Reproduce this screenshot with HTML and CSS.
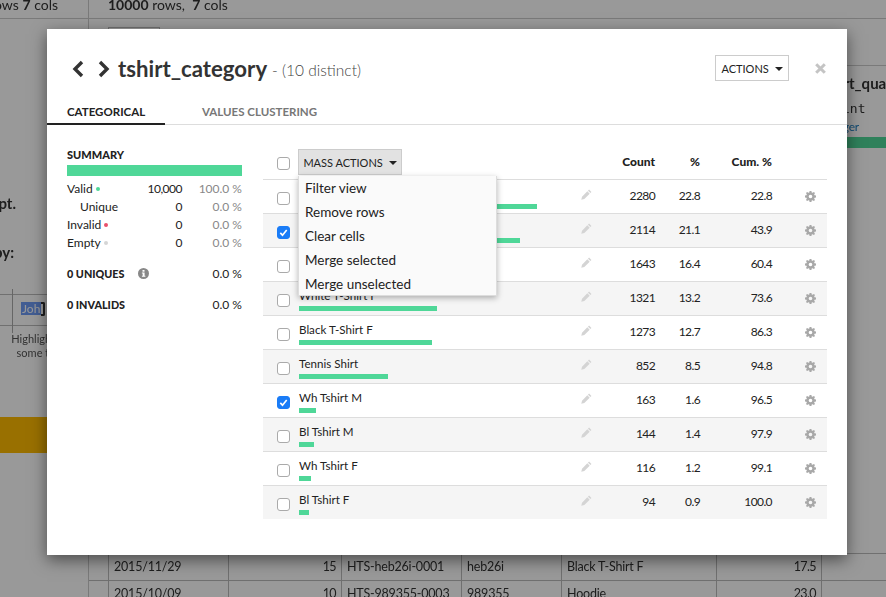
FILE: index.html
```html
<!doctype html>
<html lang="en">
<head>
<meta charset="utf-8">
<title>tshirt_category</title>
<link rel="stylesheet" href="styles.css">
</head>
<body>

<svg class="defs" width="0" height="0">
	<symbol id="gear" viewBox="0 0 12 12">
		<path fill-rule="evenodd" d="M5 0h2l.3 1.600 1 .4L9.700 1.100l1.200 1.200L10 3.700l.4 1L12 5v2l-1.600.3-.4 1 .9 1.400-1.200 1.200L8.300 10l-1 .4L7 12H5l-.3-1.600-1-.4-1.400.9-1.200-1.200L2 8.300l-.4-1L0 7V5l1.600-.3.4-1-.9-1.400 1.200-1.200L3.700 2l1-.4zM6 4a2 2 0 1 0 0 4 2 2 0 0 0 0-4z"/>
	</symbol>
	<symbol id="pencil" viewBox="0 0 12 12">
		<path d="M8.800.6l2.600 2.600-1.200 1.200-2.600-2.600zM6.900 2.500l2.600 2.600-5.900 5.900-3.300.8.800-3.400z"/>
	</symbol>
	<symbol id="check" viewBox="0 0 12 12">
		<path d="M2.500 6.500l2.400 2.400 4.600-5.600" fill="none" stroke="#fff" stroke-width="1.800"/>
	</symbol>
</svg>

<div class="backdrop">
	<div class="topstrip">
		<div class="topstrip-left"><span>10000 rows <b>7</b> cols</span></div>
		<div class="topstrip-main"><b>10000</b> rows,&nbsp; <b>7</b> cols</div>
	</div>
	<div class="middle">
		<div class="side">
			<div class="side-line side-strong side-first">Accept.</div>
			<div class="side-line side-query">Display by:</div>
			<div class="side-cells"><i class="side-vline"></i><span class="side-hl">John</span><i class="side-bracket"></i></div>
			<div class="side-line side-hint">Highlight</div>
			<div class="side-line side-hint">some te</div>
			<div class="side-band"></div>
		</div>
		<div class="main"><div class="main-btn"></div></div>
		<div class="rightcol">
			<div class="rightcol-name">tshirt_quantity</div>
			<div class="rightcol-type">int</div>
			<div class="rightcol-meaning">Integer</div>
			<div class="rightcol-bar"></div>
		</div>
	</div>
	<div class="bgtable">
		<div class="bgrow">
			<span>2015/11/29</span><span class="num">15</span><span>HTS-heb26i-0001</span><span>heb26i</span><span>Black T-Shirt F</span><span class="num">17.5</span><span></span>
		</div>
		<div class="bgrow">
			<span>2015/10/09</span><span class="num">10</span><span>HTS-989355-0003</span><span>989355</span><span>Hoodie</span><span class="num">23.0</span><span></span>
		</div>
	</div>
</div>
<div class="scrim"></div>

<div class="modal">

	<div class="modal-head">
		<div class="title">
			<svg class="nav" width="14" height="18" viewBox="0 0 14 18"><path d="M11 2L4 9l7 7" fill="none" stroke="#333" stroke-width="3.400"/></svg>
			<svg class="nav nav-next" width="14" height="18" viewBox="0 0 14 18"><path d="M3 2l7 7-7 7" fill="none" stroke="#333" stroke-width="3.400"/></svg>
			<h1>tshirt_category</h1>
			<span class="distinct">- (10 distinct)</span>
		</div>
		<button class="btn-actions">ACTIONS <i class="caret"></i></button>
		<svg class="close" width="11" height="11" viewBox="0 0 11 11"><path d="M1.200 1.200l8.600 8.600M9.800 1.200l-8.600 8.600" stroke="#c4c4c4" stroke-width="3"/></svg>
	</div>

	<div class="tabs">
		<div class="tab tab-on">CATEGORICAL</div>
		<div class="tab">VALUES CLUSTERING</div>
	</div>

	<div class="modal-body">

		<div class="summary">
			<div class="summary-title">SUMMARY</div>
			<div class="summary-bar"></div>
			<div class="stat"><span>Valid <i class="dot dot-valid"></i></span><span class="stat-n">10,000</span><span class="stat-p">100.0 %</span></div>
			<div class="stat"><span class="stat-sub">Unique</span><span class="stat-n">0</span><span class="stat-p">0.0 %</span></div>
			<div class="stat"><span>Invalid <i class="dot dot-invalid"></i></span><span class="stat-n">0</span><span class="stat-p">0.0 %</span></div>
			<div class="stat"><span>Empty <i class="dot dot-empty"></i></span><span class="stat-n">0</span><span class="stat-p">0.0 %</span></div>
			<div class="total">
				<b>0 UNIQUES</b>
				<svg class="info" width="11" height="11" viewBox="0 0 11 11"><circle cx="5.500" cy="5.500" r="5.500" fill="#888"/><rect x="4.500" y="2" width="2" height="1.700" fill="#fff"/><path d="M3.900 4.500h2.700v3.200h.8v1H3.900v-1h.8V5.500h-.8z" fill="#fff"/></svg>
				<span>0.0 %</span>
			</div>
			<div class="total"><b>0 INVALIDS</b><span>0.0 %</span></div>
		</div>

		<div class="values">
			<div class="grid-row values-head">
				<span class="box"></span>
				<div class="mass">
					<button class="btn-mass">MASS ACTIONS <i class="caret"></i></button>
					<div class="menu">
						<div>Filter view</div>
						<div>Remove rows</div>
						<div>Clear cells</div>
						<div>Merge selected</div>
						<div>Merge unselected</div>
					</div>
				</div>
				<b class="num col-count">Count</b>
				<b class="num">%</b>
				<b class="num">Cum. %</b>
			</div>

			<div class="grid-row item">
				<span class="box"></span>
				<div class="label">White T-Shirt M<div class="bar" style="width:238px"></div></div>
				<svg class="pencil"><use href="#pencil"/></svg>
				<span class="num">2280</span><span class="num">22.8</span><span class="num">22.8</span>
				<svg class="gear"><use href="#gear"/></svg>
			</div>
			<div class="grid-row item">
				<span class="box box-on"><svg width="12" height="12"><use href="#check"/></svg></span>
				<div class="label">Hoodie<div class="bar" style="width:221px"></div></div>
				<svg class="pencil"><use href="#pencil"/></svg>
				<span class="num">2114</span><span class="num">21.1</span><span class="num">43.9</span>
				<svg class="gear"><use href="#gear"/></svg>
			</div>
			<div class="grid-row item">
				<span class="box"></span>
				<div class="label">Black T-Shirt M<div class="bar" style="width:171px"></div></div>
				<svg class="pencil"><use href="#pencil"/></svg>
				<span class="num">1643</span><span class="num">16.4</span><span class="num">60.4</span>
				<svg class="gear"><use href="#gear"/></svg>
			</div>
			<div class="grid-row item">
				<span class="box"></span>
				<div class="label">White T-Shirt F<div class="bar" style="width:138px"></div></div>
				<svg class="pencil"><use href="#pencil"/></svg>
				<span class="num">1321</span><span class="num">13.2</span><span class="num">73.6</span>
				<svg class="gear"><use href="#gear"/></svg>
			</div>
			<div class="grid-row item">
				<span class="box"></span>
				<div class="label">Black T-Shirt F<div class="bar" style="width:133px"></div></div>
				<svg class="pencil"><use href="#pencil"/></svg>
				<span class="num">1273</span><span class="num">12.7</span><span class="num">86.3</span>
				<svg class="gear"><use href="#gear"/></svg>
			</div>
			<div class="grid-row item">
				<span class="box"></span>
				<div class="label">Tennis Shirt<div class="bar" style="width:89px"></div></div>
				<svg class="pencil"><use href="#pencil"/></svg>
				<span class="num">852</span><span class="num">8.5</span><span class="num">94.8</span>
				<svg class="gear"><use href="#gear"/></svg>
			</div>
			<div class="grid-row item">
				<span class="box box-on"><svg width="12" height="12"><use href="#check"/></svg></span>
				<div class="label">Wh Tshirt M<div class="bar" style="width:17px"></div></div>
				<svg class="pencil"><use href="#pencil"/></svg>
				<span class="num">163</span><span class="num">1.6</span><span class="num">96.5</span>
				<svg class="gear"><use href="#gear"/></svg>
			</div>
			<div class="grid-row item">
				<span class="box"></span>
				<div class="label">Bl Tshirt M<div class="bar" style="width:15px"></div></div>
				<svg class="pencil"><use href="#pencil"/></svg>
				<span class="num">144</span><span class="num">1.4</span><span class="num">97.9</span>
				<svg class="gear"><use href="#gear"/></svg>
			</div>
			<div class="grid-row item">
				<span class="box"></span>
				<div class="label">Wh Tshirt F<div class="bar" style="width:12px"></div></div>
				<svg class="pencil"><use href="#pencil"/></svg>
				<span class="num">116</span><span class="num">1.2</span><span class="num">99.1</span>
				<svg class="gear"><use href="#gear"/></svg>
			</div>
			<div class="grid-row item">
				<span class="box"></span>
				<div class="label">Bl Tshirt F<div class="bar" style="width:10px"></div></div>
				<svg class="pencil"><use href="#pencil"/></svg>
				<span class="num">94</span><span class="num">0.9</span><span class="num">100.0</span>
				<svg class="gear"><use href="#gear"/></svg>
			</div>
		</div>

	</div>
</div>

</body>
</html>
```

FILE: styles.css
```css
html, body { height: 100%; margin: 0; }
body { background: #fff; color: #222; font: 13px Lato, "Noto Sans", sans-serif; height: 597px; overflow: hidden; position: relative; }
b { font-weight: 700; }
.defs { display: block; height: 0; }

/* page behind the dialog */
.backdrop { color: #333; display: grid; filter: blur(.4px); grid-template-rows: 19px 1fr 44px; height: 597px; }
.scrim { background: rgba(0, 0, 0, .4); inset: 0; position: absolute; }

.topstrip { border-bottom: 1px solid #ccc; display: flex; font-size: 14px; line-height: 9px; overflow: hidden; }
.topstrip-left { border-right: 1px solid #ccc; display: flex; justify-content: flex-end; padding-right: 30px; white-space: nowrap; width: 58px; }
.topstrip-main { padding-left: 19px; }

.middle { display: grid; grid-template-columns: 88px 1fr 39px; min-height: 0; }
.side { overflow: hidden; width: 55px; }
.side-line { display: flex; justify-content: flex-end; white-space: nowrap; }
.side-first { margin-top: 174px; padding-right: 39px; }
.side-strong { font-size: 15px; font-weight: 700; line-height: 20px; }
.side-query { font-size: 15px; font-weight: 700; line-height: 20px; margin-top: 29px; padding-right: 41px; }
.side-cells { align-items: flex-start; border-bottom: 1px solid #bbb; border-top: 1px solid #bbb; display: flex; height: 23px; margin-top: 32px; padding: 7px 10px 0 0; }
.side-vline { background: #aaa; height: 44px; margin: -13px auto 0 12px; width: 1px; }
.side-hl { background: #6f9cf5; box-sizing: border-box; color: #fff; font-size: 12px; height: 13px; line-height: 13px; overflow: hidden; padding-left: 1px; width: 20px; }
.side-bracket { border: 2px solid #333; border-left: 0; border-radius: 0 2px 2px 0; box-sizing: border-box; height: 14px; width: 4px; }
.side-hint { color: #555; font-size: 11px; line-height: 14px; }
.side-hint:nth-child(4) { margin-top: 6px; }
.side-band { background: #ffbb00; height: 36px; margin-top: 57px; }

.main { border-left: 1px solid #ccc; padding: 8px 0 0 19px; }
.main-btn { border: 1px solid #bbb; height: 40px; width: 50px; }

.rightcol { overflow: hidden; }
.rightcol-name { border-top: 1px solid #ccc; font-size: 15px; font-weight: 700; line-height: 34px; margin: 46px 0 0 -28px; white-space: nowrap; }
.rightcol-type { font: 13px/18px "DejaVu Sans Mono", monospace; margin-left: -5px; }
.rightcol-meaning { color: #1f7fc0; font-size: 12px; letter-spacing: -.2px; line-height: 18px; margin-left: -24px; }
.rightcol-bar { background: #4fd798; height: 11px; margin-top: 1px; }

.bgtable { border-left: 1px solid #ccc; margin-left: 88px; }
.bgrow { border-top: 1px solid #bbb; box-sizing: border-box; display: grid; font-size: 12.500px; grid-template-columns: 19px 120px 113px 120px 100px 155px 105px 1fr; height: 27px; letter-spacing: -.2px; line-height: 26px; }
.bgrow::before { content: ""; grid-column: 1; }
.bgrow span { border-left: 1px solid #bbb; overflow: hidden; padding: 0 5px; white-space: nowrap; }
.bgrow .num { text-align: right; }

/* dialog */
.modal { background: #fff; box-shadow: 0 5px 15px rgba(0, 0, 0, .5); height: 526px; left: 47px; position: absolute; top: 29px; width: 800px; }

.modal-head { align-items: center; display: flex; height: 26px; padding: 26px 21px 0 24px; }
.title { align-items: center; display: flex; flex: 1; margin-top: 2px; }
.nav-next { margin-left: 12px; }
h1 { color: #333; font-size: 22.200px; font-weight: 700; line-height: 26px; margin: 0 5px 0 7px; }
.distinct { color: #444; font-size: 15.500px; font-weight: 300; margin-top: 2px; }
.btn-actions { background: #fff; border: 1px solid #ccc; color: #222; font: 11px Lato, sans-serif; height: 26px; padding: 0; width: 74px; }
.close { margin-left: 26px; }
.caret { border-left: 4px solid transparent; border-right: 4px solid transparent; border-top: 4px solid #222; display: inline-block; margin-left: 3px; vertical-align: 2px; }

.tabs { border-bottom: 1px solid #ddd; box-sizing: border-box; display: flex; height: 24px; margin-top: 20px; }
.tab { box-sizing: border-box; color: #777; font-size: 11.500px; font-weight: 700; height: 24px; line-height: 22px; padding: 0 20px; }
.tab-on { border-bottom: 2px solid #222; color: #222; margin-right: 17px; width: 118px; }

.modal-body { display: flex; padding-left: 20px; }

.summary { padding-top: 23px; width: 175px; }
.summary-title { font-size: 11px; font-weight: 900; line-height: 14px; }
.summary-bar { background: #4fd798; height: 11px; margin: 3px 0 4px; }
.stat { display: grid; font-size: 12px; grid-template-columns: 75px 40px 60px; line-height: 18px; }
.stat-sub { padding-left: 13px; }
.stat-n { letter-spacing: -.5px; text-align: right; }
.stat-p { color: #888; text-align: right; }
.dot { border-radius: 50%; display: inline-block; height: 4px; vertical-align: 2px; width: 4px; }
.dot-valid { background: #4fd798; }
.dot-invalid { background: #e9506a; }
.dot-empty { background: #d5d5d5; }
.total { display: flex; font-size: 12px; line-height: 18px; margin-top: 13px; }
.total b { font-size: 10.800px; font-weight: 900; }
.total span { margin-left: auto; }
.info { margin: 3px 0 0 14px; }

.values { margin-left: 21px; padding-top: 24px; width: 564px; }
.grid-row { align-items: center; display: grid; font-size: 12px; grid-template-columns: 36px 282px 11px 63px 45px 72px 33px 11px 11px; }
.values-head { align-items: start; border-bottom: 1px solid #ddd; height: 30px; }
.values-head b { font-size: 12px; font-weight: 900; letter-spacing: 0; line-height: 25px; }
.values-head .box { margin-top: 8px; }
.mass { grid-column: 2 / span 2; margin-left: -1px; position: relative; }
.btn-mass { background: #e2e2e2; border: 1px solid #ccc; color: #222; font: 11px Lato, sans-serif; height: 26px; padding: 0; width: 104px; }
.col-count { grid-column: 4; }
.menu { background: #fafafa; border: 1px solid #ddd; border-top: 0; box-shadow: 0 2px 6px rgba(0, 0, 0, .3); box-sizing: border-box; font-size: 13.500px; height: 120px; left: 0; position: absolute; top: 27px; width: 199px; z-index: 2; }
.menu div { line-height: 24px; padding-left: 6px; }

.item { border-bottom: 1px solid #ddd; box-sizing: border-box; height: 34px; }
.item:nth-child(odd) { background: #f5f5f5; }
.item:last-child { border-bottom: 0; height: 33px; }
.num { letter-spacing: -.6px; text-align: right; }
.item .num { margin-top: -2px; }
.box { background: #fff; border: 1px solid #aaa; border-radius: 3px; box-sizing: border-box; display: block; height: 13px; margin-left: 14px; margin-top: 3px; width: 13px; }
.box-on { background: #1a7cf7; border-color: #1a7cf7; display: grid; place-items: center; }
.box-on svg { display: block; height: 11px; width: 11px; }
.label { font-size: 11.600px; line-height: 14px; padding-top: 3px; }
.bar { background: #4fd798; height: 5px; margin-top: 3px; }
.pencil { fill: #d4d4d4; height: 11px; margin-top: -5px; width: 11px; }
.gear { fill: #a8a8a8; grid-column: 8; height: 11px; width: 11px; }
```
